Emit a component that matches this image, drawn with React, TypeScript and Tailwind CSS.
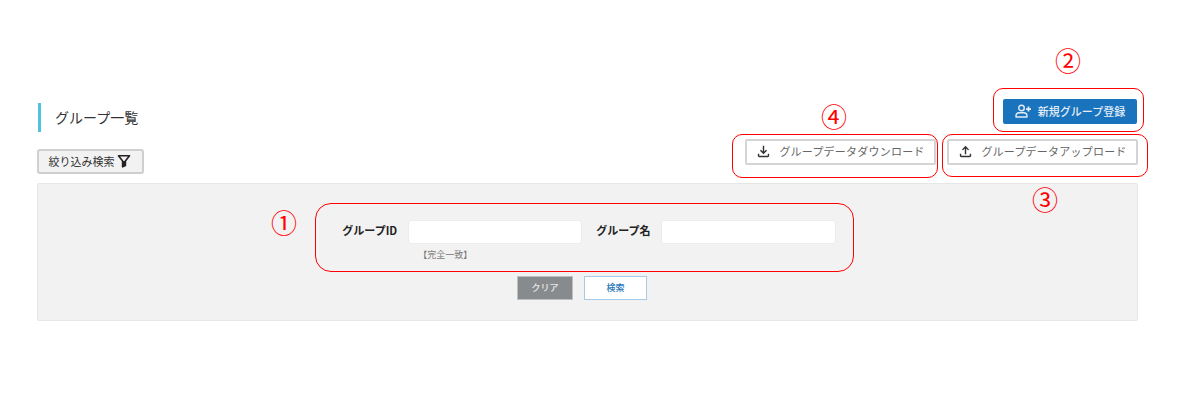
import { MdOutlineFileDownload, MdOutlineFileUpload } from 'react-icons/md';

const font = { fontFamily: '"Noto Sans CJK JP", "Noto Sans", sans-serif' };

function FilterIcon() {
  return (
    <svg width="14" height="14" viewBox="0 0 14 14" className="text-[#222]">
      <path d="M1.5 1.8h11L8.4 7v4.6l-2.8 1.2V7z" fill="none" stroke="currentColor" strokeWidth="1.6" strokeLinejoin="round" />
      <path d="M6 7h2v5l-2 .8z" fill="currentColor" />
    </svg>
  );
}

function UserAddIcon() {
  return (
    <svg width="17" height="14" viewBox="0 0 17 14" fill="none" stroke="currentColor" strokeWidth="1.4">
      <circle cx="6.5" cy="4" r="2.8" />
      <path d="M1 13v-1c0-2 1.6-3.2 3.4-3.2h4.2c1.8 0 3.4 1.2 3.4 3.2v1z" strokeLinejoin="round" />
      <path d="M13.5 2.6v5M11 5.1h5" strokeWidth="1.7" />
    </svg>
  );
}

function OutlineButton({ label, icon }: { label: string; icon: React.ReactNode }) {
  return (
    <button className="flex h-[26px] w-[191px] items-center justify-center gap-[7px] rounded-[2px] border-2 border-[#d4d4d4] bg-white pb-px pr-px text-[11px] tracking-[0.02em] text-[#666]">
      {icon}
      {label}
    </button>
  );
}

function Note({ className, children }: { className: string; children?: React.ReactNode }) {
  return <div className={`pointer-events-none absolute ${className}`}>{children}</div>;
}

export default function App() {
  return (
    <div className="relative h-[410px] w-[1180px] overflow-hidden bg-white" style={font}>
      <div className="flex flex-col pl-[37px] pr-[42px] pt-[99px]">
        <div className="flex items-start justify-between">
          <div className="flex flex-col">
            <div className="ml-px mt-1 flex h-[29px] items-center border-l-[3px] border-[#4fc3de] pb-px pl-[14px] text-[14px] text-[#333]">
              グループ一覧
            </div>
            <button className="mt-[17px] flex h-[25px] w-[107px] items-center justify-center gap-[2px] rounded-[3px] border-2 border-[#cfcfcf] bg-[#f2f2f2] pb-px pr-[2px] text-[11px] text-[#333]">
              絞り込み検索
              <FilterIcon />
            </button>
          </div>
          <div className="flex flex-col items-end">
            <button className="mr-px flex h-[25px] w-[134px] items-center justify-center gap-[6px] rounded-[2px] bg-[#1a73bd] pb-px text-[11px] font-medium text-[#e4eef7]">
              <UserAddIcon />
              新規グループ登録
            </button>
            <div className="mt-[15px] flex gap-[11px]">
              <OutlineButton label="グループデータダウンロード" icon={<MdOutlineFileDownload size={17} className="text-[#333]" />} />
              <OutlineButton label="グループデータアップロード" icon={<MdOutlineFileUpload size={17} className="text-[#333]" />} />
            </div>
          </div>
        </div>

        <div className="mt-[9px] flex h-[138px] w-[1101px] flex-col items-center rounded-[2px] border border-[#e6e6e6] bg-[#f2f2f2]">
          <div className="mt-[36px] flex w-[496px] items-start">
            <label className="w-[60px] whitespace-nowrap text-right text-[11px] font-bold leading-[20px] text-[#222]">グループID</label>
            <div className="ml-[11px] flex flex-col">
              <input className="h-[24px] w-[174px] rounded-[3px] border border-[#ececec] bg-white" />
              <span className="ml-[10px] mt-[5px] text-[9px] leading-[12px] text-[#777]">【完全一致】</span>
            </div>
            <label className="ml-[14px] w-[55px] whitespace-nowrap text-[11px] font-bold leading-[20px] text-[#222]">グループ名</label>
            <input className="ml-[10px] h-[24px] w-[175px] rounded-[3px] border border-[#ececec] bg-white" />
          </div>
          <div className="mr-[11px] mt-[15px] flex gap-[11px]">
            <button className="h-[24px] w-[56px] border border-[#bdbfc0] bg-[#888b8d] text-[9px] font-medium text-[#e8e8e8]">クリア</button>
            <button className="h-[24px] w-[63px] border border-[#a6cbe8] bg-white text-[9px] font-medium text-[#2a78ba]">検索</button>
          </div>
        </div>
      </div>

      {/* red annotations drawn over the screenshot */}
      <Note className="left-[315px] top-[203px] h-[69px] w-[539px] rounded-[16px] border border-[#f00]" />
      <Note className="left-[993px] top-[88px] h-[44px] w-[151px] rounded-[10px] border border-[#f00]" />
      <Note className="left-[942px] top-[134px] h-[43px] w-[206px] rounded-[10px] border border-[#f00]" />
      <Note className="left-[732px] top-[134px] h-[44px] w-[206px] rounded-[10px] border border-[#f00]" />
      <Note className="left-[270px] top-[207px] w-[28px] text-center text-[26px] leading-[30px] text-[#f00]">①</Note>
      <Note className="left-[1054px] top-[45px] w-[28px] text-center text-[26px] leading-[30px] text-[#f00]">②</Note>
      <Note className="left-[1031px] top-[184px] w-[28px] text-center text-[26px] leading-[30px] text-[#f00]">③</Note>
      <Note className="left-[820px] top-[101px] w-[28px] text-center text-[26px] leading-[30px] text-[#f00]">④</Note>
    </div>
  );
}
